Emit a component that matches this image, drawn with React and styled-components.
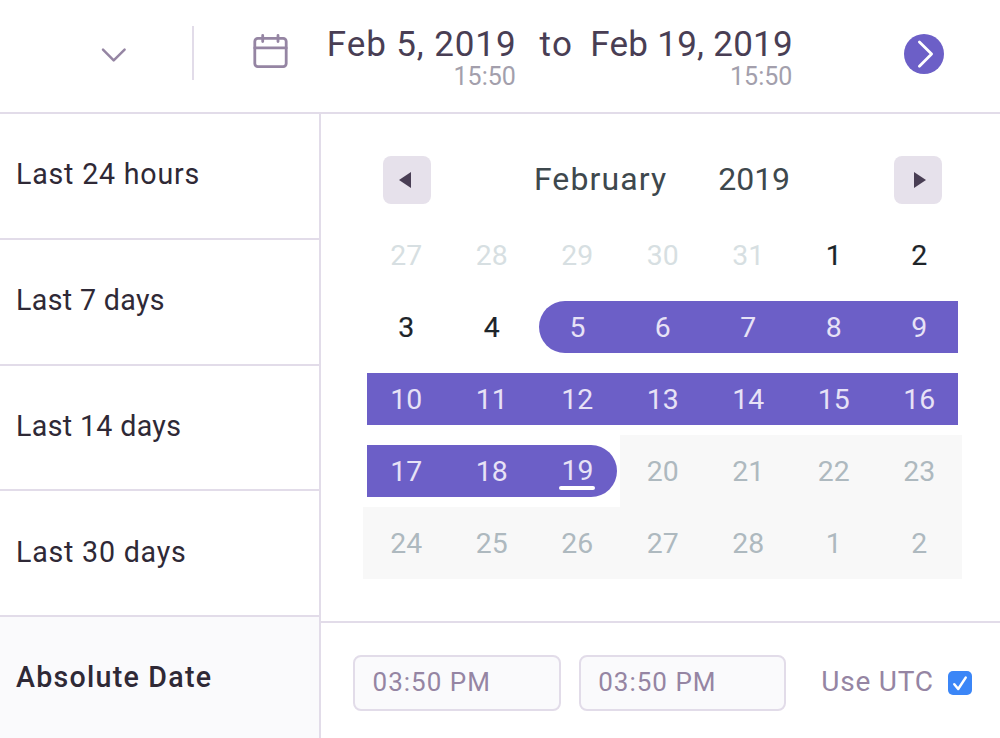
import React from "react";
import styled, { createGlobalStyle } from "styled-components";

const Global = createGlobalStyle`
  * { box-sizing: border-box; }
  body { margin: 0; background: #fff; font-family: Roboto, "Liberation Sans", sans-serif; }
`;
const line = "#e2dce9";
const mauve = "#9585a3";

const Page = styled.div`
  width: 1000px; height: 738px; overflow: hidden;
  display: flex; flex-direction: column;
`;
const Header = styled.header`
  height: 114px; flex: none; display: flex; align-items: flex-start;
  border-bottom: 2px solid ${line};
`;
const Chevron = styled.svg`margin: 46px 0 0 100px; flex: none;`;
const Divider = styled.div`width: 2px; height: 54px; margin: 26px 0 0 64px; background: ${line}; flex: none;`;
const Calendar = styled.svg`margin: 32px 0 0 58px; flex: none;`;
const DateBlock = styled.div`
  display: flex; flex-direction: column; align-items: flex-end;
  margin-top: 27px; margin-left: ${(p) => p.$left}px; width: ${(p) => p.$width}px; flex: none;
`;
const DateText = styled.div`
  font-size: 35px; line-height: 36px; color: #493e54; white-space: nowrap; letter-spacing: ${(p) => p.$ls}px;
`;
const TimeText = styled.div`
  font-size: 25px; line-height: 27px; color: #a39fac; padding-right: 0.7px;
`;
const To = styled(DateText)`margin: 27px 0 0 23px; width: 34px;`;
const Go = styled.svg`margin: 34px 0 0 111px; flex: none;`;
const Body = styled.main`flex: 1; display: flex; min-height: 0;`;
const Side = styled.nav`width: 321px; flex: none; border-right: 2px solid ${line};`;
const Option = styled.div`
  height: 125.75px; padding: 0 0 3px 16px; display: flex; align-items: center;
  border-bottom: 2px solid ${line}; font-size: 28.6px; color: #2f2936;
  letter-spacing: ${(p) => p.$ls}px;
  background: ${(p) => (p.$active ? "#fafafc" : "#fff")};
  font-weight: ${(p) => (p.$active ? 500 : 400)};
`;
const Panel = styled.section`flex: 1; display: flex; flex-direction: column;`;
const Picker = styled.div`height: 507px; flex: none; padding: 42px 38px 0 42.4px;`;
const MonthBar = styled.div`
  height: 48px; display: flex; align-items: center; justify-content: space-between; padding: 0 20px 0 19.6px;
`;
const MonthButton = styled.button`
  width: 48px; height: 48px; border: 0; border-radius: 8px; background: #e6e1eb;
  padding: ${(p) => (p.$next ? "0 0 1px 3px" : "0 3px 1px 0")};
  display: flex; align-items: center; justify-content: center;
`;
const MonthName = styled.div`
  display: flex; font-size: 32px; line-height: 38px; color: #3e484d; padding: 0 1px 2px 0;
`;
const Month = styled.span`letter-spacing: 1.1px; margin-right: 51px;`;
const Year = styled.span`letter-spacing: 0;`;
const Days = styled.div`
  display: grid; grid-template-columns: repeat(7, 85.5px); grid-auto-rows: 72px; margin-top: 15px;
`;
const Day = styled.div`
  display: flex; align-items: center; justify-content: center;
  background: ${(p) => (p.$kind === "off" ? "#f8f8f8" : "transparent")};
`;
const Mark = styled.div`
  flex: 1; height: 52px; display: flex; align-items: center; justify-content: center;
  margin-left: ${(p) => (p.$start ? 4.6 : p.$first ? 4 : 0)}px;
  margin-right: ${(p) => (p.$end ? 3.3 : p.$last ? 4 : 0)}px;
  padding-right: ${(p) => (p.$first ? 4 : 0)}px; padding-left: ${(p) => (p.$last ? 4 : 0)}px;
  border-radius: ${(p) => (p.$start ? "26px 0 0 26px" : p.$end ? "0 26px 26px 0" : "0")};
  background: ${(p) => (p.$kind === "sel" ? "#6c5fc7" : "transparent")};
  color: ${(p) => ({ out: "#d7dfe2", on: "#1d2429", sel: "#e7e2f6", off: "#aeb9bf" })[p.$kind]};
  font-size: 28.4px;
  -webkit-text-stroke: ${(p) => (p.$kind === "on" ? 0.2 : 0)}px currentColor;
`;
const Today = styled.span`
  position: relative; line-height: 36px;
  &::after {
    content: ""; position: absolute; left: 50%; bottom: -1px; width: 36px; height: 4px;
    margin-left: -18px; border-radius: 2px; background: #fff;
  }
`;
const Footer = styled.footer`flex: 1; border-top: 2px solid ${line}; padding: 32px 0 0 32px; display: flex; align-items: flex-start;`;
const TimeBox = styled.div`
  width: 207.6px; height: 56px; margin-right: 18px; padding-left: 17.6px; flex: none;
  border: 2px solid ${line}; border-radius: 8px; background: #fafafc;
  color: ${mauve}; font-size: 26px; line-height: 51px; letter-spacing: 1px;
`;
const Utc = styled.label`
  display: flex; align-items: center; height: 53px; margin-left: 17px; color: ${mauve};
  font-size: 28px; letter-spacing: 0.8px; white-space: nowrap;
`;
const Check = styled.svg`margin: 3px 0 0 14px; flex: none;`;

const options = [
  ["Last 24 hours", 0.8],
  ["Last 7 days", 0.35],
  ["Last 14 days", 0.35],
  ["Last 30 days", 0.78],
  ["Absolute Date", 1.25],
];
const days = [27, 28, 29, 30, 31, ...Array.from({ length: 28 }, (_, i) => i + 1), 1, 2];
const kindOf = (i) => (i < 5 ? "out" : i < 9 ? "on" : i < 24 ? "sel" : "off");

export default function App() {
  return (
    <Page>
      <Global />
      <Header>
        <Chevron width="28" height="18" viewBox="0 0 28 18" fill="none" stroke={mauve} strokeWidth="2.5" strokeLinecap="round" strokeLinejoin="round">
          <path d="M3 3.6L13.7 14.4L24.6 3.6" />
        </Chevron>
        <Divider />
        <Calendar width="38" height="38" viewBox="0 0 38 38" fill="none" stroke={mauve} strokeWidth="2.8" strokeLinecap="round">
          <rect x="2.8" y="6.4" width="31.4" height="28.2" rx="3" />
          <path d="M2.8 15.9H34.2M10.7 3.5V9.5M26 3.5V9.5" />
        </Calendar>
        <DateBlock $left={37.5} $width={189}><DateText $ls={0.9}>Feb 5, 2019</DateText><TimeText>15:50</TimeText></DateBlock>
        <To $ls={1.5}>to</To>
        <DateBlock $left={16.5} $width={203}><DateText $ls={0.27}>Feb 19, 2019</DateText><TimeText>15:50</TimeText></DateBlock>
        <Go width="40" height="40" viewBox="0 0 40 40" fill="none">
          <circle cx="20" cy="20" r="20" fill="#6c5fc7" />
          <path d="M15.4 8L27.6 20L15.4 32.2" stroke="#fff" strokeWidth="2.8" strokeLinecap="round" strokeLinejoin="round" />
        </Go>
      </Header>
      <Body>
        <Side>{options.map(([label, ls], i) => <Option key={label} $active={i === 4} $ls={ls}>{label}</Option>)}</Side>
        <Panel>
          <Picker>
            <MonthBar>
              <MonthButton aria-label="Previous"><svg width="12" height="16" viewBox="0 0 12 16"><path d="M0 8L12 0V16Z" fill="#493e54" /></svg></MonthButton>
              <MonthName><Month>February</Month><Year>2019</Year></MonthName>
              <MonthButton $next aria-label="Next"><svg width="12" height="16" viewBox="0 0 12 16"><path d="M12 8L0 0V16Z" fill="#493e54" /></svg></MonthButton>
            </MonthBar>
            <Days>
              {days.map((d, i) => (
                <Day key={i} $kind={kindOf(i)}>
                  <Mark $kind={kindOf(i)} $first={i % 7 === 0 || i === 9} $last={i % 7 === 6 || i === 23} $start={i === 9} $end={i === 23}>
                    {i === 23 ? <Today>{d}</Today> : d}
                  </Mark>
                </Day>
              ))}
            </Days>
          </Picker>
          <Footer>
            <TimeBox>03:50 PM</TimeBox>
            <TimeBox>03:50 PM</TimeBox>
            <Utc>Use UTC
              <Check width="24" height="24" viewBox="0 0 24 24" fill="none">
                <rect width="24" height="24" rx="5" fill="#3b86f7" />
                <path d="M6.3 13.2L10.2 18L17.7 6.6" stroke="#fff" strokeWidth="2.5" strokeLinecap="round" strokeLinejoin="round" />
              </Check>
            </Utc>
          </Footer>
        </Panel>
      </Body>
    </Page>
  );
}
